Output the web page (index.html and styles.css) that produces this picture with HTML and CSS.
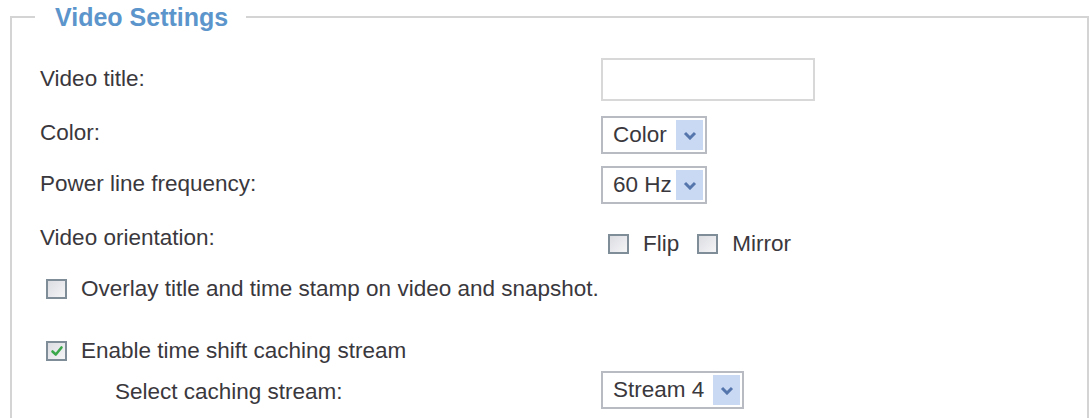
FILE: index.html
```html
<!DOCTYPE html>
<html lang="en">
<head>
<meta charset="utf-8">
<title>Video Settings</title>
<link rel="stylesheet" href="styles.css">
</head>
<body>
<fieldset class="panel">
  <legend class="panel-title">Video Settings</legend>

  <div class="row row-title">
    <span class="label">Video title:</span>
    <span class="textbox"></span>
  </div>

  <div class="row row-color">
    <span class="label">Color:</span>
    <span class="select w-short"><span class="select-text">Color</span><span class="select-arrow"><svg viewBox="0 0 14 9" width="14" height="9"><polyline points="2,2 7,7 12,2" /></svg></span></span>
  </div>

  <div class="row row-freq">
    <span class="label">Power line frequency:</span>
    <span class="select w-short"><span class="select-text">60 Hz</span><span class="select-arrow"><svg viewBox="0 0 14 9" width="14" height="9"><polyline points="2,2 7,7 12,2" /></svg></span></span>
  </div>

  <div class="row row-orient">
    <span class="label">Video orientation:</span>
    <span class="checks">
      <span class="check-item"><span class="box"></span>Flip</span>
      <span class="check-item"><span class="box"></span>Mirror</span>
    </span>
  </div>

  <div class="row row-overlay">
    <span class="check-item wide"><span class="box"></span>Overlay title and time stamp on video and snapshot.</span>
  </div>

  <div class="row row-cache">
    <span class="check-item wide"><span class="box checked"><svg viewBox="0 0 14 14" width="14" height="14"><polyline points="2.5,7.5 5.8,10.5 11.5,3.5" /></svg></span>Enable time shift caching stream</span>
  </div>

  <div class="row row-stream">
    <span class="label indent">Select caching stream:</span>
    <span class="select w-long"><span class="select-text">Stream 4</span><span class="select-arrow"><svg viewBox="0 0 14 9" width="14" height="9"><polyline points="2,2 7,7 12,2" /></svg></span></span>
  </div>
</fieldset>
</body>
</html>
```

FILE: styles.css
```css
html, body {
  margin: 0;
  padding: 0;
  background: #ffffff;
}

body {
  font-family: "Liberation Sans", Arial, sans-serif;
  color: #3a383d;
  font-size: 22.5px;
}

.panel {
  margin: 3px 3px 0 10px;
  padding: 0 0 0 28px;
  border: 2px solid #d4d4d4;
  border-bottom: none;
  height: 430px;
  box-sizing: border-box;
}

.panel-title {
  margin-left: -5px;
  padding: 0 18px 0 20px;
  font-size: 25px;
  font-weight: bold;
  color: #5b95cb;
  line-height: 28px;
}

.row {
  display: flex;
  align-items: center;
}

.label {
  width: 561px;
  flex: none;
}

.label.indent {
  padding-left: 75px;
  box-sizing: border-box;
}

.row-title { margin-top: 26px; height: 44px; }
.row-color { margin-top: 14px; height: 40px; }
.row-color .label { padding-bottom: 5px; }
.row-freq { margin-top: 11px; height: 38px; }
.row-freq .label { padding-bottom: 2px; }
.row-orient { margin-top: 15px; height: 38px; align-items: flex-start; padding-top: 6px; box-sizing: border-box; }
.row-overlay { margin-top: 14px; height: 36px; }
.row-cache { margin-top: 26px; height: 36px; }
.row-stream { margin-top: 3px; height: 40px; }
.row-stream .select { margin-top: -4px; }

.textbox {
  width: 214px;
  height: 43px;
  border: 2px solid #d8d8d8;
  box-sizing: border-box;
  background: #fff;
}

.select {
  display: flex;
  align-items: center;
  height: 38px;
  border: 2px solid #b8bcc2;
  box-sizing: border-box;
  padding: 2px;
  background: #fff;
}

.w-short { width: 106px; }
.w-long { width: 143px; }

.select-text {
  flex: 1;
  padding-left: 8px;
  color: #3a383d;
}

.select-arrow {
  width: 27px;
  align-self: stretch;
  background: #cad9f3;
  display: flex;
  align-items: center;
  justify-content: center;
}

.select-arrow svg polyline {
  fill: none;
  stroke: #5476ad;
  stroke-width: 3;
}

.checks {
  display: flex;
  gap: 18px;
  padding-left: 7px;
  padding-top: 6px;
}

.check-item {
  display: flex;
  align-items: center;
  gap: 14px;
}

.check-item.wide {
  padding-left: 6px;
}

.box {
  width: 21px;
  height: 20px;
  border: 2px solid #7f8d99;
  box-sizing: border-box;
  background: linear-gradient(135deg, #dcdde2, #f5f5f7);
  display: flex;
  align-items: center;
  justify-content: center;
}

.box svg polyline {
  fill: none;
  stroke: #3aa84a;
  stroke-width: 2.6;
  stroke-linecap: round;
  stroke-linejoin: round;
}
```
